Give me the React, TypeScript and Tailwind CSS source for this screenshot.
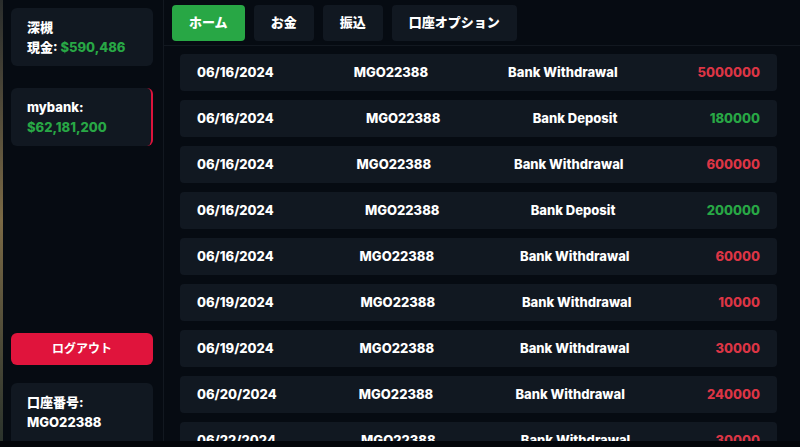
const rows = [
  { date: "06/16/2024", id: "MGO22388", type: "Bank Withdrawal", amount: "5000000", out: true },
  { date: "06/16/2024", id: "MGO22388", type: "Bank Deposit", amount: "180000", out: false },
  { date: "06/16/2024", id: "MGO22388", type: "Bank Withdrawal", amount: "600000", out: true },
  { date: "06/16/2024", id: "MGO22388", type: "Bank Deposit", amount: "200000", out: false },
  { date: "06/16/2024", id: "MGO22388", type: "Bank Withdrawal", amount: "60000", out: true },
  { date: "06/19/2024", id: "MGO22388", type: "Bank Withdrawal", amount: "10000", out: true },
  { date: "06/19/2024", id: "MGO22388", type: "Bank Withdrawal", amount: "30000", out: true },
  { date: "06/20/2024", id: "MGO22388", type: "Bank Withdrawal", amount: "240000", out: true },
  { date: "06/22/2024", id: "MGO22388", type: "Bank Withdrawal", amount: "30000", out: true },
];

const tabs = ["ホーム", "お金", "振込", "口座オプション"];

export default function App() {
  return (
    <div
      className="w-[800px] h-[447px] overflow-hidden flex flex-col bg-[#03060a] text-white text-[13px] font-extrabold"
      style={{ fontFamily: 'Inter, "Noto Sans CJK JP", sans-serif' }}
    >
      <div className="flex h-[441px]">
        {/* game background peeking through */}
        <div className="w-[3px] bg-gradient-to-b from-[#2a2d2c] via-[#7b6a45] to-[#2b332c]" />

        {/* sidebar */}
        <aside className="w-[161px] shrink-0 bg-[#060b12] border-r border-[#121820] pl-2 pr-[10px] pt-2 flex flex-col">
          <div className="bg-[#111821] rounded-md px-4 py-[9px] leading-5">
            <div>深槻</div>
            <div>
              現金: <span className="text-[#28a745]">$590,486</span>
            </div>
          </div>

          <div className="mt-[22px] bg-[#111821] rounded-md border-r-2 border-[#dc143c] px-4 py-[9px] leading-5">
            <div>mybank:</div>
            <div className="text-[#28a745]">$62,181,200</div>
          </div>

          <div className="mt-auto">
            <button className="w-full h-8 rounded-md bg-[#e0143c] text-white text-[12px] font-bold">
              ログアウト
            </button>
            <div className="mt-[18px] bg-[#111821] rounded-t-md px-4 pt-[9px] pb-[9px] leading-5">
              <div>口座番号:</div>
              <div>MGO22388</div>
            </div>
          </div>
        </aside>

        {/* main */}
        <main className="flex-1 bg-[#060b12] flex flex-col overflow-hidden">
          <div className="flex gap-[9px] pl-2 pt-[5px] pb-1 border-b border-[#121820]">
            {tabs.map((t, i) => (
              <button
                key={t}
                className={
                  i === 0
                    ? "h-9 px-[17px] rounded bg-[#28a745] text-white"
                    : "h-9 px-[17px] rounded bg-[#111821] text-white"
                }
              >
                {t}
              </button>
            ))}
          </div>

          <div className="flex flex-col gap-[9px] pl-4 pr-[23px] pt-2">
            {rows.map((r, i) => (
              <div
                key={i}
                className="h-[37px] shrink-0 rounded bg-[#111821] px-[17px] flex items-center justify-between"
              >
                <span>{r.date}</span>
                <span>{r.id}</span>
                <span>{r.type}</span>
                <span className={r.out ? "text-[#dc3545]" : "text-[#28a745]"}>{r.amount}</span>
              </div>
            ))}
          </div>
        </main>
      </div>
    </div>
  );
}
